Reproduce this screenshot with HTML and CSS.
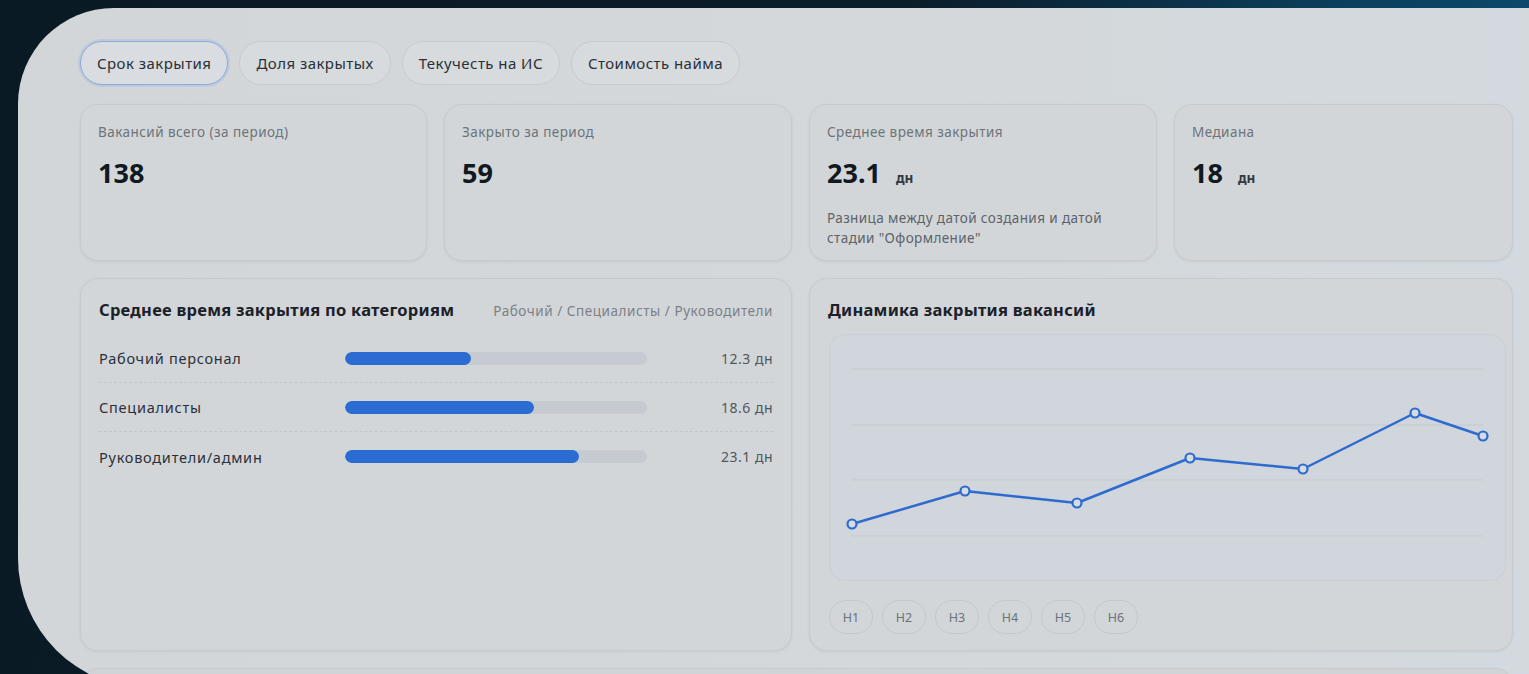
FILE: index.html
```html
<!DOCTYPE html>
<html lang="ru">
<head>
<meta charset="utf-8">
<title>Сроки закрытия вакансий</title>
<link rel="stylesheet" href="styles.css">
</head>
<body>
<div class="screen">
  <main class="panel">
    <nav class="tabs">
      <button class="tab tab-active">Срок закрытия</button>
      <button class="tab">Доля закрытых</button>
      <button class="tab">Текучесть на ИС</button>
      <button class="tab">Стоимость найма</button>
    </nav>

    <section class="grid">
      <div class="card kpi">
        <div class="kpi-label">Вакансий всего (за период)</div>
        <div class="kpi-value">138</div>
      </div>
      <div class="card kpi">
        <div class="kpi-label">Закрыто за период</div>
        <div class="kpi-value">59</div>
      </div>
      <div class="card kpi">
        <div class="kpi-label">Среднее время закрытия</div>
        <div class="kpi-value">23.1<span class="unit">дн</span></div>
        <div class="kpi-note">Разница между датой создания и датой стадии "Оформление"</div>
      </div>
      <div class="card kpi">
        <div class="kpi-label">Медиана</div>
        <div class="kpi-value">18<span class="unit">дн</span></div>
      </div>

      <div class="card wide">
        <div class="card-head">
          <h2 class="card-title">Среднее время закрытия по категориям</h2>
          <span class="card-hint">Рабочий / Специалисты / Руководители</span>
        </div>
        <ul class="bars">
          <li class="bar-row">
            <span class="bar-label">Рабочий персонал</span>
            <span class="track"><span class="fill" style="width:41.7%"></span></span>
            <span class="bar-value">12.3 дн</span>
          </li>
          <li class="bar-row">
            <span class="bar-label">Специалисты</span>
            <span class="track"><span class="fill" style="width:62.6%"></span></span>
            <span class="bar-value">18.6 дн</span>
          </li>
          <li class="bar-row">
            <span class="bar-label">Руководители/админ</span>
            <span class="track"><span class="fill" style="width:77.5%"></span></span>
            <span class="bar-value">23.1 дн</span>
          </li>
        </ul>
      </div>

      <div class="card wide">
        <h2 class="card-title">Динамика закрытия вакансий</h2>
        <div class="chart">
          <svg width="675" height="245" viewBox="0 0 675 245">
            <g class="gridlines">
              <line x1="21" y1="34" x2="653" y2="34"/>
              <line x1="21" y1="90" x2="653" y2="90"/>
              <line x1="21" y1="145" x2="653" y2="145"/>
              <line x1="21" y1="201" x2="653" y2="201"/>
            </g>
            <polyline class="line" points="22,189 135,156 247,168 360,123 473,134 585,78 653,101"/>
            <g class="dots">
              <circle cx="22" cy="189" r="4.5"/>
              <circle cx="135" cy="156" r="4.5"/>
              <circle cx="247" cy="168" r="4.5"/>
              <circle cx="360" cy="123" r="4.5"/>
              <circle cx="473" cy="134" r="4.5"/>
              <circle cx="585" cy="78" r="4.5"/>
              <circle cx="653" cy="101" r="4.5"/>
            </g>
          </svg>
        </div>
        <div class="chips">
          <span class="chip">H1</span>
          <span class="chip">H2</span>
          <span class="chip">H3</span>
          <span class="chip">H4</span>
          <span class="chip">H5</span>
          <span class="chip">H6</span>
        </div>
      </div>

      <div class="card next"></div>
    </section>
  </main>
</div>
</body>
</html>
```

FILE: styles.css
```css
* { box-sizing: border-box; }

html, body {
  margin: 0;
  width: 1529px;
  height: 674px;
  overflow: hidden;
}

body {
  background: linear-gradient(100deg, #0a1a24 0%, #0b1d29 55%, #0b3d5a 80%, #0c4f74 100%);
  font-family: "Noto Sans", "Open Sans", sans-serif;
  color: #1a2129;
}

.screen {
  padding: 8px 0 0 18px;
  width: 1529px;
  height: 674px;
  overflow: hidden;
}

.panel {
  width: 1560px;
  height: 680px;
  border-radius: 96px 0 0 130px;
  background: linear-gradient(90deg, #d3d6d9 0%, #d4d8db 60%, #d3dadf 100%);
  padding: 33px 47px 0 62px;
  overflow: hidden;
}

/* top tab switcher */
.tabs {
  display: flex;
  gap: 11px;
  height: 44px;
}

.tab {
  font-family: inherit;
  font-size: 15px;
  letter-spacing: 0.45px;
  color: #2b3036;
  background: #d7dbde;
  border: 1px solid #c6cbcf;
  border-radius: 22px;
  padding: 0 16px;
  height: 44px;
}

.tab-active {
  border: 1.5px solid #8eaad6;
  box-shadow: 0 0 0 2px rgba(150, 180, 225, 0.35);
  background: #d9dde1;
}

/* dashboard grid */
.grid {
  margin-top: 19px;
  display: grid;
  grid-template-columns: 347px 348px 348px 1fr;
  grid-template-rows: 157px 373px 60px;
  gap: 17px;
  width: 1433px;
}

.card {
  background: #d2d6d9;
  border: 1px solid #c7cbcf;
  border-radius: 18px;
  box-shadow: 0 1px 3px rgba(40, 50, 60, 0.08);
}

.kpi {
  padding: 17px 17px;
}

.kpi-label {
  font-size: 13.5px;
  letter-spacing: 0.45px;
  color: #6d7378;
  line-height: 20px;
}

.kpi-value {
  margin-top: 15px;
  font-size: 27px;
  font-weight: 700;
  line-height: 32px;
  color: #101820;
}

.unit {
  font-size: 13.5px;
  font-weight: 700;
  color: #333a42;
  margin-left: 15px;
}

.kpi-note {
  margin-top: 14px;
  font-size: 13.5px;
  letter-spacing: 0.4px;
  line-height: 20px;
  color: #5c6369;
  width: 295px;
}

.wide {
  grid-column: span 2;
  padding: 19px 18px;
}

.card-head {
  display: flex;
  justify-content: space-between;
  align-items: baseline;
}

.card-title {
  margin: 0;
  font-size: 16.5px;
  letter-spacing: 0.25px;
  font-weight: 700;
  line-height: 24px;
  color: #1b2128;
}

.card-hint {
  font-size: 13.5px;
  letter-spacing: 0.55px;
  color: #7b8186;
}

/* horizontal bars */
.bars {
  list-style: none;
  margin: 12px 0 0;
  padding: 0;
}

.bar-row {
  display: grid;
  grid-template-columns: 246px 302px 1fr;
  align-items: center;
  height: 49px;
  border-bottom: 1px dashed #c2c7cb;
}

.bar-row:last-child {
  border-bottom: none;
}

.bar-label {
  font-size: 14.5px;
  letter-spacing: 0.75px;
  color: #2a3037;
}

.track {
  display: block;
  height: 13px;
  border-radius: 7px;
  background: #c6cbd1;
  overflow: hidden;
}

.fill {
  display: block;
  height: 100%;
  border-radius: 7px;
  background: #2b6cd2;
}

.bar-value {
  text-align: right;
  font-size: 14px;
  letter-spacing: 0.5px;
  color: #50575e;
}

/* line chart */
.chart {
  margin-top: 12px;
  margin-left: 1px;
  height: 247px;
  width: 677px;
  border: 1px solid #c9cfd4;
  border-radius: 16px;
  background: #d0d6db;
}

.chart svg {
  display: block;
}

.gridlines line {
  stroke: #c3c9ce;
  stroke-width: 1;
}

.line {
  fill: none;
  stroke: #2e6ad0;
  stroke-width: 2.5;
  stroke-linejoin: round;
}

.dots circle {
  fill: #d6dce1;
  stroke: #2e6ad0;
  stroke-width: 2.2;
}

.chips {
  display: flex;
  gap: 9px;
  margin-top: 19px;
  margin-left: 1px;
}

.chip {
  width: 44px;
  height: 34px;
  border: 1px solid #c4c9ce;
  border-radius: 17px;
  display: flex;
  align-items: center;
  justify-content: center;
  font-size: 12.5px;
  color: #6b7278;
}

.next {
  grid-column: 1 / -1;
  background: #d0d4d7;
}
```
